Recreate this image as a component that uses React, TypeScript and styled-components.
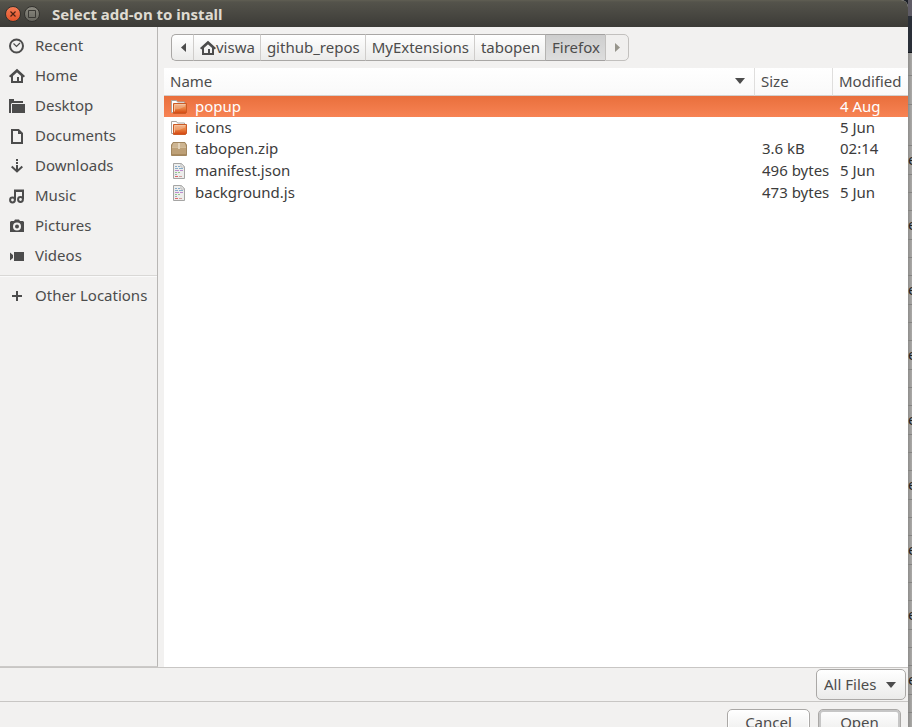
import React from "react";
import styled, { createGlobalStyle, css } from "styled-components";

const GlobalStyle = createGlobalStyle`
  * { box-sizing: border-box; }
  html, body { margin: 0; overflow: hidden; }
  body, button, select { font: 15px/18px "Noto Sans", "Open Sans", sans-serif; color: #4c4c4c; }
`;

const Screen = styled.div`
  display: grid;
  grid-template-columns: minmax(0, 1fr) 4px;
  height: 100vh;
  overflow: hidden;
  background: #1c1f26;
`;

const Dialog = styled.main`
  display: flex;
  flex-direction: column;
  height: calc(100vh + 14px);
  background: #f2f1f0;
  border-radius: 0 7px 0 0;
  overflow: hidden;
`;

const TitleBar = styled.header`
  display: flex;
  align-items: center;
  gap: 3px;
  height: 27px;
  padding-left: 5px;
  background: linear-gradient(#605e53, #54534b 2px, #3c3b37);
`;

const WindowButton = styled.button<{ $close?: boolean }>`
  display: grid;
  place-items: center;
  width: 16px;
  height: 16px;
  padding: 0;
  border: 1px solid #33322e;
  border-radius: 50%;
  background: ${(p) => (p.$close ? "linear-gradient(#f47b54, #e2542a)" : "linear-gradient(#8b8980, #67665f)")};
`;

const Title = styled.h1`
  margin: 0 0 0 9px;
  font-size: 15px;
  line-height: 20px;
  font-weight: 700;
  color: #dfdbd2;
`;

const Label = styled.span`
  padding-bottom: 2px;
`;

const Body = styled.div`
  display: flex;
  flex: 1;
  min-height: 0;
`;

const Sidebar = styled.nav`
  width: 158px;
  padding-top: 4px;
  border: 1px solid #b8b6b4;
  border-width: 0 1px 1px 0;
  border-bottom-color: #cccac8;
`;

const Place = styled.a`
  display: flex;
  align-items: center;
  gap: 10px;
  height: 30px;
  padding-left: 9px;
  color: #4c4c4c;
  text-decoration: none;
  white-space: nowrap;
`;

const Separator = styled.hr`
  height: 2px;
  margin: 4px 0;
  border: 0;
  border-top: 1px solid #d9d8d6;
  background: #fafafa;
`;

const Browser = styled.section`
  display: flex;
  flex-direction: column;
  flex: 1;
  min-width: 0;
  padding-left: 6px;
`;

const PathBar = styled.div`
  display: flex;
  height: 41px;
  padding: 7px;
`;

const Crumb = styled.button<{ $active?: boolean; $faded?: boolean }>`
  display: flex;
  align-items: center;
  justify-content: center;
  padding: 0 5px 0 6px;
  border: 1px solid #a9a7a5;
  border-width: 1px 0 1px 1px;
  border-left-color: #cfcdcb;
  background: linear-gradient(#ffffff, #ebebea);
  white-space: nowrap;
  &:first-child {
    width: 22px;
    border-left-color: #a9a7a5;
    border-radius: 5px 0 0 5px;
  }
  &:last-child {
    width: 24px;
    border-right-width: 1px;
    border-radius: 0 5px 5px 0;
  }
  ${(p) =>
    p.$active &&
    css`
      background: linear-gradient(#cecece, #dddddd);
      border-color: #a3a1a0;
      border-left-color: #b4b3b1;
    `}
  ${(p) =>
    p.$faded &&
    css`
      background: #f0efee;
      border-color: #c2c0be;
      color: #96948b;
    `}
`;

const ListArea = styled.div`
  flex: 1;
  min-height: 0;
  background: #ffffff;
`;

const FileTable = styled.table`
  width: 100%;
  table-layout: fixed;
  border-collapse: separate;
  border-spacing: 0;
  text-align: left;
`;

const NameCol = styled.col``;
const SizeCol = styled.col`
  width: 78px;
`;
const DateCol = styled.col`
  width: 76px;
`;

const HeadCell = styled.th`
  height: 28px;
  padding: 0 6px 2px;
  border-bottom: 1px solid #d2d0ce;
  background: linear-gradient(#ffffff, #f9f9f9);
  font-weight: 400;
  white-space: nowrap;
  & + & {
    border-left: 1px solid #dfdedd;
  }
`;

const SortLabel = styled.div`
  display: flex;
  align-items: center;
  justify-content: space-between;
  padding-right: 3px;
`;

const FileRow = styled.tr<{ $selected?: boolean; $folder?: boolean }>`
  height: ${(p) => (p.$folder ? 21 : 22)}px;
  color: ${(p) => (p.$selected ? "#ffffff" : "#3c3c3c")};
  background: ${(p) => (p.$selected ? "linear-gradient(#e96f3c, #f78354)" : "none")};
`;

const FileCell = styled.td`
  padding: 0 0 2px 8px;
  white-space: nowrap;
`;

const NameCell = styled(FileCell)`
  padding: 0 0 0 7px;
`;

const FileName = styled.div`
  display: flex;
  align-items: center;
  gap: 8px;
`;

const FilterBar = styled.div`
  display: flex;
  justify-content: flex-end;
  height: 35px;
  padding: 1px 2px 2px;
  border: 1px solid #c8c6c4;
  border-width: 1px 0;
`;

const FilterBox = styled.label`
  position: relative;
  display: block;
  color: #4c4c4c;
  svg {
    position: absolute;
    right: 10px;
    top: 13px;
    pointer-events: none;
  }
`;

const FilterSelect = styled.select`
  appearance: none;
  height: 31px;
  width: 90px;
  padding: 0 0 2px 7px;
  border: 1px solid #aaa8a6;
  border-radius: 5px;
  background: linear-gradient(#ffffff, #ebebea);
`;

const Actions = styled.footer`
  display: flex;
  justify-content: flex-end;
  gap: 8px;
  height: 39px;
  padding: 7px 7px 5px;
`;

const ActionButton = styled.button<{ $default?: boolean }>`
  width: 83px;
  height: 28px;
  padding: 0 0 2px;
  border: 1px solid #aaa8a6;
  border-radius: 5px;
  background: linear-gradient(#ffffff, #ebebea);
  box-shadow: ${(p) => (p.$default ? "inset 0 0 0 2px #c6c6c6" : "inset 0 0 0 1px #ffffff")};
`;

const Behind = styled.aside`
  overflow: hidden;
  padding-top: 16px;
  background: linear-gradient(#5f5c66, #30353f);
`;

const BehindBar = styled.div`
  height: 37px;
  background: #2a2f38;
  border-bottom: 1px solid #11141a;
`;

const Slice = styled.div<{ $h: number }>`
  height: ${(p) => p.$h}px;
  padding-top: 4px;
  overflow: hidden;
  border-bottom: 1px solid #858482;
  background: linear-gradient(90deg, #8e8d8b, #abaaa8);
  color: #222222;
`;

type IconProps = { children: React.ReactNode };
const Icon = ({ children }: IconProps) => (
  <svg width="16" height="16" viewBox="0 0 16 16" fill="none" stroke="#4c4c4c" strokeWidth="2" aria-hidden="true">
    {children}
  </svg>
);

const HomeIcon = () => (
  <Icon>
    <path d="M.6 8.700 8 2l7.400 6.700" />
    <path d="M3 7.500V14h10V7.500L8 3z" />
    <path d="M8 9h2v5H8z" fill="#4c4c4c" stroke="none" />
  </Icon>
);

const Arrow = ({ d, w, h }: { d: string; w: number; h: number }) => (
  <svg width={w} height={h} viewBox={`0 0 ${w} ${h}`} fill="currentColor" aria-hidden="true">
    <path d={d} />
  </svg>
);

const FolderIcon = () => (
  <svg width="16" height="16" viewBox="0 0 16 16" aria-hidden="true">
    <defs>
      <linearGradient id="folder" x2="0" y2="1">
        <stop stopColor="#efa777" />
        <stop offset=".5" stopColor="#e9803f" />
        <stop offset="1" stopColor="#d2430f" />
      </linearGradient>
    </defs>
    <path d="M.5 13.500v-12h5l1 1.500h7v3h-10v7.500z" fill="#fff" stroke="#aaa49f" />
    <path d="M2.500 4.500h13v9l-1 1h-12z" fill="url(#folder)" stroke="#cc5b26" />
    <path d="M3.500 5.500h11M3.500 5.500v7" stroke="#f5bd94" fill="none" />
    <path d="M4 10.500q6-.5 10-3v-2H4z" fill="#fff" opacity=".22" />
  </svg>
);

const ZipIcon = () => (
  <svg width="16" height="16" viewBox="0 0 16 16" aria-hidden="true">
    <path d="M2 1.500h12L15.500 4v10.500H.5V4z" fill="#bda077" stroke="#a1865f" />
    <path d="M2.500 2h11L15 6H1z" fill="#cdb592" />
    <path d="M1 6.500h14" stroke="#d3bc98" />
    <path d="M7 2h2v6H7z" fill="#e3d3b9" />
    <path d="M1 13.500h14" stroke="#a98a5e" />
  </svg>
);

const CodeIcon = () => (
  <svg width="16" height="16" viewBox="0 0 16 16" aria-hidden="true">
    <path d="M2.500.5h8l3 3v12h-11z" fill="#ededec" stroke="#a5a5a4" />
    <path d="M10 .5V4h3.500z" fill="#fff" stroke="#b7b7b6" />
    <g opacity=".8">
      <path d="M4 3.500h2M7 3.500h2M4 5.500h3M8 5.500h4" stroke="#6e9cc4" />
      <path d="M4 7.500h4M9 7.500h3" stroke="#b274c6" />
      <path d="M4 9.500h2M7 9.500h2" stroke="#7fbf78" />
      <path d="M4 11.500h2" stroke="#8d9db0" />
      <path d="M4 13.500h3" stroke="#d84848" />
      <path d="M8 13.500h3" stroke="#c98c8c" />
    </g>
  </svg>
);

const places = [
  {
    label: "Recent",
    icon: (
      <Icon>
        <circle cx="7.500" cy="8" r="6.500" />
        <path d="M4.500 5.500 7.500 8.500 11 5" strokeWidth="1.200" />
      </Icon>
    ),
  },
  { label: "Home", icon: <HomeIcon /> },
  {
    label: "Desktop",
    icon: (
      <Icon>
        <path d="M0 1h5v2h9v2H3l-1 1v9H0z" fill="#4c4c4c" stroke="none" />
        <path d="M3 6h13v9H3z" fill="#4c4c4c" stroke="none" />
      </Icon>
    ),
  },
  {
    label: "Documents",
    icon: (
      <Icon>
        <path d="M3 2h6.500L13 5.500V15H3z" />
        <path d="M9 2v4h4z" fill="#4c4c4c" stroke="none" />
      </Icon>
    ),
  },
  {
    label: "Downloads",
    icon: (
      <Icon>
        <path d="M8 1v2M8 4v2M8 7v6" />
        <path d="m2.700 8.500 5.300 5 5.300-5" />
      </Icon>
    ),
  },
  {
    label: "Music",
    icon: (
      <Icon>
        <path d="M6 12V2.500h8V11M6 3h8" />
        <circle cx="3.500" cy="12" r="2.400" />
        <circle cx="11.500" cy="11.500" r="2.400" />
      </Icon>
    ),
  },
  {
    label: "Pictures",
    icon: (
      <Icon>
        <path
          d="M5 3l1-1.500h4L11 3h3l1 1v10H1V4l1-1zM8 4.500a4 4 0 1 0 0 8 4 4 0 0 0 0-8z"
          fill="#4c4c4c"
          fillRule="evenodd"
          stroke="none"
        />
        <circle cx="8" cy="8.500" r="2" fill="#4c4c4c" stroke="none" />
      </Icon>
    ),
  },
  {
    label: "Videos",
    icon: (
      <Icon>
        <path d="M1 4.500 4 7V5l1-1h10v9H5l-1-1v-2l-3 2.500z" fill="#4c4c4c" stroke="none" />
        <path d="M4.500 4v9" stroke="#f2f1f0" strokeWidth="1" />
      </Icon>
    ),
  },
];

const files = [
  { name: "popup", icon: <FolderIcon />, size: "", date: "4 Aug", folder: true, selected: true },
  { name: "icons", icon: <FolderIcon />, size: "", date: "5 Jun", folder: true },
  { name: "tabopen.zip", icon: <ZipIcon />, size: "3.6 kB", date: "02:14" },
  { name: "manifest.json", icon: <CodeIcon />, size: "496 bytes", date: "5 Jun" },
  { name: "background.js", icon: <CodeIcon />, size: "473 bytes", date: "5 Jun" },
];

const slices = [23, 29, 41];
const groups = Array.from({ length: 9 }, (_, i) => i);

export default function App() {
  return (
    <Screen>
      <GlobalStyle />
      <Dialog>
        <TitleBar>
          <WindowButton $close aria-label="Close">
            <svg width="6" height="6" viewBox="0 0 6 6" stroke="#4a2113" strokeWidth="1.200">
              <path d="m.5.5 5 5m0-5-5 5" />
            </svg>
          </WindowButton>
          <WindowButton aria-label="Maximize">
            <svg width="8" height="8" viewBox="0 0 8 8" fill="none" stroke="#3a3935">
              <path d="M.5.5h7v7h-7z" />
            </svg>
          </WindowButton>
          <Title>Select add-on to install</Title>
        </TitleBar>
        <Body>
          <Sidebar aria-label="Places">
            {places.map((p) => (
              <Place key={p.label} href="#">
                {p.icon}
                <Label>{p.label}</Label>
              </Place>
            ))}
            <Separator />
            <Place href="#">
              <Icon>
                <path d="M8 3v10M3 8h10" />
              </Icon>
              <Label>Other Locations</Label>
            </Place>
          </Sidebar>
          <Browser>
            <PathBar>
              <Crumb aria-label="Back">
                <Arrow w={5} h={9} d="M5 0v9L0 4.500z" />
              </Crumb>
              <Crumb>
                <HomeIcon />
                <Label>viswa</Label>
              </Crumb>
              <Crumb>
                <Label>github_repos</Label>
              </Crumb>
              <Crumb>
                <Label>MyExtensions</Label>
              </Crumb>
              <Crumb>
                <Label>tabopen</Label>
              </Crumb>
              <Crumb $active>
                <Label>Firefox</Label>
              </Crumb>
              <Crumb $faded aria-label="Forward">
                <Arrow w={5} h={9} d="M0 0v9l5-4.500z" />
              </Crumb>
            </PathBar>
            <ListArea>
              <FileTable>
                <colgroup>
                  <NameCol />
                  <SizeCol />
                  <DateCol />
                </colgroup>
                <thead>
                  <tr>
                    <HeadCell>
                      <SortLabel>
                        Name
                        <Arrow w={10} h={6} d="M0 0h10L5 6z" />
                      </SortLabel>
                    </HeadCell>
                    <HeadCell>Size</HeadCell>
                    <HeadCell>Modified</HeadCell>
                  </tr>
                </thead>
                <tbody>
                  {files.map((f) => (
                    <FileRow key={f.name} $selected={f.selected} $folder={f.folder}>
                      <NameCell>
                        <FileName>
                          {f.icon}
                          <Label>{f.name}</Label>
                        </FileName>
                      </NameCell>
                      <FileCell>{f.size}</FileCell>
                      <FileCell>{f.date}</FileCell>
                    </FileRow>
                  ))}
                </tbody>
              </FileTable>
            </ListArea>
          </Browser>
        </Body>
        <FilterBar>
          <FilterBox>
            <FilterSelect aria-label="File type">
              <option>All Files</option>
            </FilterSelect>
            <Arrow w={10} h={6} d="M0 0h10L5 6z" />
          </FilterBox>
        </FilterBar>
        <Actions>
          <ActionButton>Cancel</ActionButton>
          <ActionButton $default>Open</ActionButton>
        </Actions>
      </Dialog>
      <Behind aria-hidden="true">
        <BehindBar />
        {slices.map((h) => (
          <Slice key={h} $h={h} />
        ))}
        {groups.map((g) => (
          <React.Fragment key={g}>
            <Slice $h={29}>e</Slice>
            <Slice $h={18} />
            <Slice $h={18} />
          </React.Fragment>
        ))}
      </Behind>
    </Screen>
  );
}
